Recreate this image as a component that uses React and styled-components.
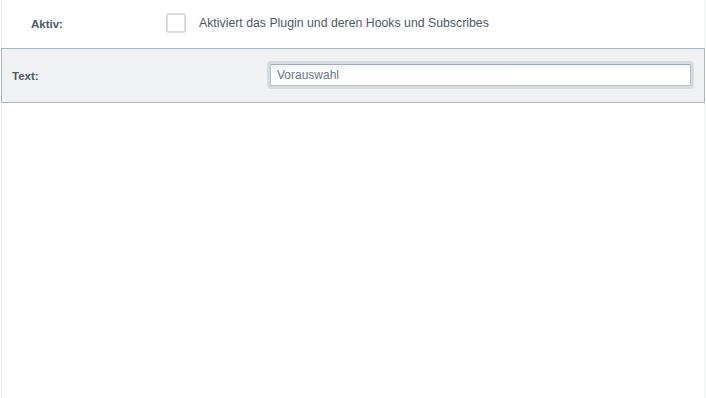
import React from "react";
import styled, { createGlobalStyle } from "styled-components";

const GlobalStyle = createGlobalStyle`
  html, body {
    margin: 0;
    padding: 0;
    background: #ffffff;
    font-family: "Liberation Sans", Arial, sans-serif;
  }
`;

const Page = styled.div`
  box-sizing: border-box;
  height: 398px;
  margin: 0 1px;
  border-left: 1px solid #f3f4f5;
  border-right: 1px solid #f3f4f5;
  background: #ffffff;
`;

const Row = styled.div`
  box-sizing: border-box;
  display: flex;
  align-items: center;
  height: ${({ shaded }) => (shaded ? "55px" : "48px")};
  margin: 0 ${({ shaded }) => (shaded ? "-1px" : "0")};
  background: ${({ shaded }) => (shaded ? "#eff1f3" : "transparent")};
  border: ${({ shaded }) => (shaded ? "1px solid #aab6c1" : "none")};
`;

const Label = styled.label`
  box-sizing: border-box;
  flex: 0 0 ${({ width }) => width}px;
  padding-left: ${({ indent }) => indent}px;
  font-size: 11.5px;
  font-weight: bold;
  color: #4a5a66;
`;

const Checkbox = styled.span`
  box-sizing: border-box;
  display: inline-block;
  width: 20px;
  height: 20px;
  margin-top: -2px;
  border: 2px solid #d9dde2;
  border-radius: 3px;
  background: #ffffff;
`;

const Help = styled.span`
  margin-left: 13px;
  margin-top: -2px;
  font-size: 12.3px;
  color: #4e5a65;
`;

const InputRing = styled.div`
  box-sizing: border-box;
  flex: 0 0 427px;
  height: 28px;
  margin-top: -1px;
  padding: 3px;
  border-radius: 4px;
  background: #d6dbe0;
`;

const TextInput = styled.input`
  box-sizing: border-box;
  display: block;
  width: 100%;
  height: 100%;
  padding: 0 6px;
  border: 1px solid #b6bec6;
  border-top-color: #a4adb6;
  border-radius: 2px;
  background: linear-gradient(#f4f5f6, #ffffff 6px);
  font-family: "Liberation Sans", Arial, sans-serif;
  font-size: 12px;
  color: #6b7682;
  outline: none;
`;

export default function App() {
  return (
    <>
      <GlobalStyle />
      <Page>
        <Row>
          <Label width={164} indent={29}>
            Aktiv:
          </Label>
          <Checkbox />
          <Help>Aktiviert das Plugin und deren Hooks und Subscribes</Help>
        </Row>
        <Row shaded>
          <Label width={265} indent={10}>
            Text:
          </Label>
          <InputRing>
            <TextInput defaultValue="Vorauswahl" />
          </InputRing>
        </Row>
      </Page>
    </>
  );
}
